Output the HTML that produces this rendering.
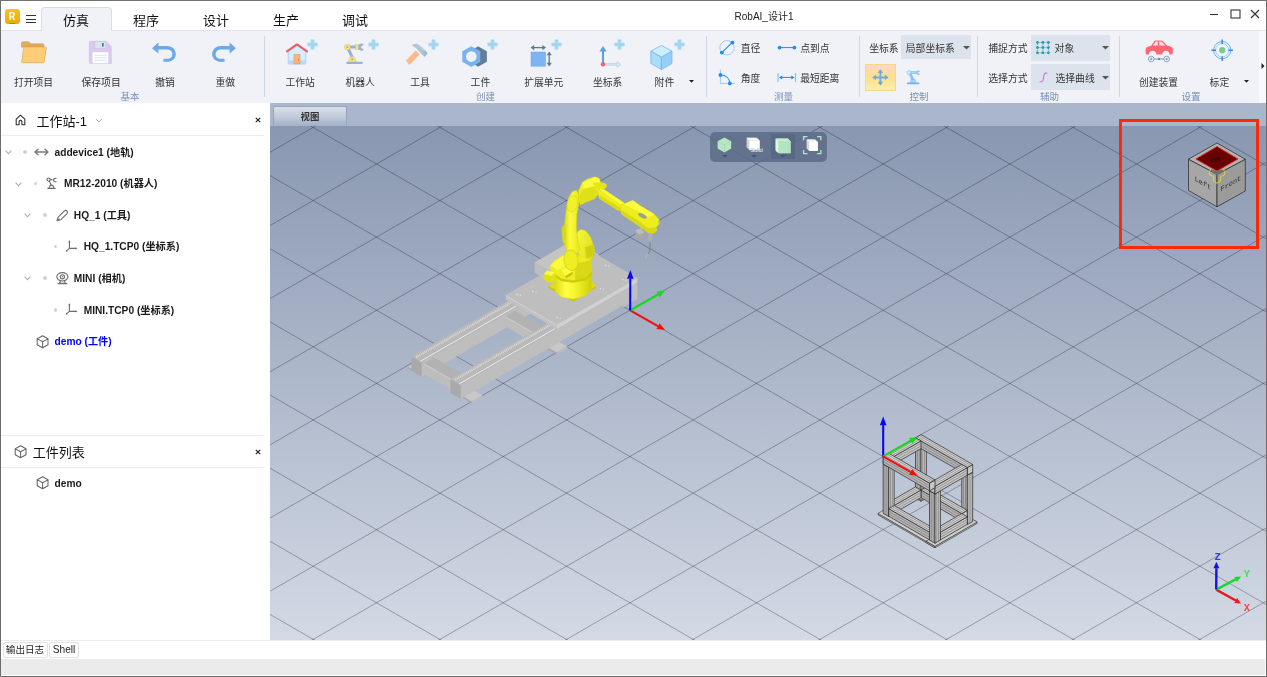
<!DOCTYPE html><html><head><meta charset="utf-8"><title>RobAI</title><style>
*{box-sizing:border-box;margin:0;padding:0}
html,body{width:1267px;height:677px;overflow:hidden;background:#fff}
body{font-family:"Liberation Sans","Noto Sans CJK SC",sans-serif;color:#222;position:relative}
.abs{position:absolute}
.t{position:absolute;white-space:nowrap;line-height:1}
.c{transform:translate(-50%,-50%)}
.lc{transform:translate(0,-50%)}
.rib{font-size:9.8px;color:#333}
.grp{font-size:9.5px;color:#7791b7}
.sep{position:absolute;width:1px;top:36px;height:61px;background:#cdd7e6}
.tree{font-size:10.2px;font-weight:bold;color:#1a1a1a}
.tab{font-size:13px;color:#111}
</style></head><body><div id="app" style="position:absolute;left:0;top:0;width:1267px;height:677px;overflow:hidden;will-change:transform">
<div class="abs" style="left:0;top:0;width:1267px;height:677px;background:#fff"></div>
<div class="abs" style="left:1px;top:30px;width:1265px;height:73px;background:#f0f2f7;border-top:1px solid #dfe6f0"></div>
<div class="abs" style="left:41px;top:7px;width:71px;height:24px;background:#f0f2f7;border:1px solid #d5deeb;border-bottom:none;border-radius:4px 4px 0 0"></div>
<div class="abs" style="left:1259px;top:31px;width:7px;height:72px;background:#f8f9fc"></div>
<svg class="abs" style="left:1260px;top:62px" width="6" height="8"><path d="M1.5 1 L4.5 4 L1.5 7Z" fill="#222"/></svg>
<div class="abs" style="left:5px;top:9px;width:15px;height:15px;border-radius:3px;background:linear-gradient(#f9c21c,#eda80c)"></div>
<div class="t c" style="left:12.4px;top:16.4px;font-size:10.5px;font-weight:bold;color:#fff;transform:translate(-50%,-50%) scaleX(0.86)">R</div>
<div class="abs" style="left:10px;top:22.5px;width:5px;height:1.5px;background:#4a8ad8"></div>
<div class="abs" style="left:26px;top:15px;width:10px;height:1.2px;background:#333"></div>
<div class="abs" style="left:26px;top:18.5px;width:10px;height:1.2px;background:#333"></div>
<div class="abs" style="left:26px;top:22px;width:10px;height:1.2px;background:#333"></div>
<div class="t c tab" style="left:76px;top:20px">仿真</div>
<div class="t c tab" style="left:146px;top:20px">程序</div>
<div class="t c tab" style="left:216px;top:20px">设计</div>
<div class="t c tab" style="left:286px;top:20px">生产</div>
<div class="t c tab" style="left:355px;top:20px">调试</div>
<div class="t c" style="left:764px;top:17.2px;font-size:10px;color:#222">RobAI_设计1</div>
<svg class="abs" style="left:1200px;top:4px" width="64" height="22"><path d="M10 10.5H18" stroke="#333" stroke-width="1.1"/><rect x="31" y="6" width="9" height="8" fill="none" stroke="#333" stroke-width="1.1"/><path d="M51 6L59 14M59 6L51 14" stroke="#333" stroke-width="1.1"/></svg>
<div class="sep" style="left:263.5px"></div>
<div class="sep" style="left:706px"></div>
<div class="sep" style="left:858.5px"></div>
<div class="sep" style="left:977.2px"></div>
<div class="sep" style="left:1118.5px"></div>
<svg class="abs" style="left:21px;top:41px;overflow:visible" width="26" height="22"><path d="M0.5 2.2Q0.5 0.8 1.8 0.8H7.2Q8 0.8 8.6 1.6L9.6 2.8H21.8Q23 2.8 23 4V6.2H0.5Z" fill="#e3ab57" stroke="#c9954a" stroke-width="0.5"/><path d="M0.5 5.5V20.6Q0.5 21.6 1.6 21.6H22Q23 21.6 23.2 20.6L25.3 7.2Q25.5 6.2 24.4 6.2H4Q3 6.2 2.8 7.2L0.6 20.8" fill="#e3ab57"/><path d="M3.6 6.1H24.5Q25.6 6.1 25.4 7.2L23.2 20.7Q23 21.7 22 21.7H1.5Q0.5 21.7 0.7 20.7L2.6 7.1Q2.8 6.1 3.6 6.1Z" fill="#ffcc78" stroke="#d9a24f" stroke-width="0.5"/></svg>
<div class="t c rib" style="left:33.5px;top:83px">打开项目</div>
<svg class="abs" style="left:88.5px;top:40.7px;overflow:visible" width="23" height="23"><path d="M1 0.3H17.2L22.3 5.4V22.4H1Q0.3 22.4 0.3 21.6V1Q0.3 0.3 1 0.3Z" fill="#dcc9f1" stroke="#c9b6e3" stroke-width="0.5"/><rect x="6" y="0.6" width="10.6" height="6.6" fill="#d9e6ef" stroke="#b9c9d6" stroke-width="0.5"/><rect x="13" y="2" width="1.6" height="3.6" fill="#5a6b7c"/><rect x="3.4" y="11" width="16" height="11.3" fill="#fff" stroke="#d8dde6" stroke-width="0.4"/><path d="M5.2 14.3H17.6M5.2 16.8H17.6M5.2 19.3H17.6" stroke="#cfe3f4" stroke-width="0.9"/></svg>
<div class="t c rib" style="left:101.1px;top:83px">保存项目</div>
<svg class="abs" style="left:152px;top:42px;overflow:visible" width="24" height="20"><path d="M0 6.2L6.4 0.4V4H14.5C20 4 23.8 7.4 23.8 12.2C23.8 16.6 20 19.8 15 19.8H12Q11.4 19.8 11.4 19.2V17.4Q11.4 16.8 12 16.8H15C18.2 16.8 20.4 15 20.4 12.2C20.4 9.2 18.2 7.4 14.8 7.4H6.4V11.6Z" fill="#6aa9ea"/></svg>
<div class="t c rib" style="left:165px;top:83px">撤销</div>
<svg class="abs" style="left:211.5px;top:42px;overflow:visible" width="24" height="20"><g transform="translate(24,0) scale(-1,1)"><path d="M0 6.2L6.4 0.4V4H14.5C20 4 23.8 7.4 23.8 12.2C23.8 16.6 20 19.8 15 19.8H12Q11.4 19.8 11.4 19.2V17.4Q11.4 16.8 12 16.8H15C18.2 16.8 20.4 15 20.4 12.2C20.4 9.2 18.2 7.4 14.8 7.4H6.4V11.6Z" fill="#6aa9ea"/></g></svg>
<div class="t c rib" style="left:225.3px;top:83px">重做</div>
<div class="t c grp" style="left:130px;top:96.5px">基本</div>
<svg class="abs" style="left:286px;top:42.5px;overflow:visible" width="22" height="22"><path d="M2.2 8.2L11 2.4L19.8 8.2V20Q19.8 21 18.8 21H3.2Q2.2 21 2.2 20Z" fill="#d6edfd" stroke="#93c4ee" stroke-width="0.7"/><path d="M2.6 17.6H19.4V20Q19.4 20.7 18.8 20.7H3.2Q2.6 20.7 2.6 20Z" fill="#b3dbf7"/><path d="M1 8.4L11 1.4L21 8.4" fill="none" stroke="#ee5a63" stroke-width="2" stroke-linecap="round" stroke-linejoin="round"/><rect x="8" y="11.5" width="6" height="9.4" fill="#ffb27a" stroke="#e8935a" stroke-width="0.6"/><rect x="12.1" y="16" width="0.9" height="1.4" fill="#c9703a"/></svg>
<svg class="abs" style="left:307.1px;top:38.7px;overflow:visible" width="11" height="11"><path d="M3.9 0.7h3.2v3.2h3.2v3.2H7.1v3.2H3.9V7.1H0.7V3.9H3.9z" fill="#a2d5f1" stroke="#aedbf3" stroke-width="0.6" stroke-linejoin="round"/></svg>
<div class="t c rib" style="left:300.2px;top:83px">工作站</div>
<svg class="abs" style="left:344px;top:42.5px;overflow:visible" width="21" height="22"><rect x="2.3" y="18.8" width="16.4" height="2.3" rx="0.8" fill="#9bb2d0"/><path d="M4.2 18.4L6.1 13.7H10.5L12.4 18.4Z" fill="#f6e27c" stroke="#dcc65e" stroke-width="0.5"/><circle cx="8.3" cy="16.3" r="1.1" fill="#9bb2d0"/><path d="M2.2 5.2L5.4 4.2L9.4 13.4L6.6 14Z" fill="#9bb2d0"/><rect x="5" y="2.5" width="7.4" height="3" fill="#9bb2d0"/><circle cx="3.3" cy="4" r="2.9" fill="#f8e580" stroke="#dcc65e" stroke-width="0.6"/><circle cx="3.3" cy="4" r="1.1" fill="#9bb2d0"/><rect x="11.6" y="1.4" width="2.8" height="5.4" fill="#f6e27c" stroke="#dcc65e" stroke-width="0.4"/><path d="M14.4 1.8L17.8 0.2L20 1.8L17.2 3.2V5L20 6.6L17.8 8L14.4 6.4Z" fill="#9bb2d0"/></svg>
<svg class="abs" style="left:367.5px;top:38.7px;overflow:visible" width="11" height="11"><path d="M3.9 0.7h3.2v3.2h3.2v3.2H7.1v3.2H3.9V7.1H0.7V3.9H3.9z" fill="#a2d5f1" stroke="#aedbf3" stroke-width="0.6" stroke-linejoin="round"/></svg>
<div class="t c rib" style="left:360.2px;top:83px">机器人</div>
<svg class="abs" style="left:406px;top:43px;overflow:visible" width="22" height="22"><path d="M0.3 17.6L9.7 7.9L13.5 11.3L4 21Q3.2 21.6 2.6 21Z" fill="#ffb98a" stroke="#f2a674" stroke-width="0.4"/><path d="M6.2 1.8Q8.6 0.6 11 0.8Q13.6 1.6 15.6 3.8L20.6 8.8L21.6 10.6L18.6 13.8L16.4 11.9L12.9 8.2L10.4 5.6Q8.6 3.8 6.4 3Z" fill="#adc6d8"/><path d="M16.8 9.2L19 7.2L21.6 10.6L18.6 13.8Z" fill="#9dbace"/><path d="M11 1.4Q13.4 2 15.2 4L18.6 7.4" fill="none" stroke="#cfdfea" stroke-width="0.9"/></svg>
<svg class="abs" style="left:427.5px;top:38.7px;overflow:visible" width="11" height="11"><path d="M3.9 0.7h3.2v3.2h3.2v3.2H7.1v3.2H3.9V7.1H0.7V3.9H3.9z" fill="#a2d5f1" stroke="#aedbf3" stroke-width="0.6" stroke-linejoin="round"/></svg>
<div class="t c rib" style="left:420px;top:83px">工具</div>
<svg class="abs" style="left:462px;top:45.5px;overflow:visible" width="26" height="21"><path d="M16 0.2L24.9 5.2V15.8L16 20.8L9 16V5Z" fill="#637c9a"/><path d="M9.3 0.2L18.3 5.3V15.8L9.3 20.9L0.3 15.8V5.3Z" fill="#78b3f0"/><circle cx="9.3" cy="10.6" r="5.3" fill="#f0f2f7"/></svg>
<svg class="abs" style="left:487.4px;top:38.7px;overflow:visible" width="11" height="11"><path d="M3.9 0.7h3.2v3.2h3.2v3.2H7.1v3.2H3.9V7.1H0.7V3.9H3.9z" fill="#a2d5f1" stroke="#aedbf3" stroke-width="0.6" stroke-linejoin="round"/></svg>
<div class="t c rib" style="left:480.4px;top:83px">工件</div>
<svg class="abs" style="left:530px;top:43px;overflow:visible" width="24" height="24"><rect x="1" y="9" width="14.6" height="14.2" fill="#7db5f3" stroke="#6ea5e6" stroke-width="0.5"/><path d="M1.6 4.6H15" stroke="#5f7892" stroke-width="1.3"/><path d="M0.6 4.6L4.2 2V7.2Z M16 4.6L12.4 2V7.2Z" fill="#5f7892"/><path d="M19.2 10V22" stroke="#5f7892" stroke-width="1.3"/><path d="M19.2 8.6L16.6 12.2H21.8Z M19.2 23.4L16.6 19.8H21.8Z" fill="#5f7892"/></svg>
<svg class="abs" style="left:551.0px;top:38.7px;overflow:visible" width="11" height="11"><path d="M3.9 0.7h3.2v3.2h3.2v3.2H7.1v3.2H3.9V7.1H0.7V3.9H3.9z" fill="#a2d5f1" stroke="#aedbf3" stroke-width="0.6" stroke-linejoin="round"/></svg>
<div class="t c rib" style="left:543.8px;top:83px">扩展单元</div>
<svg class="abs" style="left:596px;top:44px;overflow:visible" width="28" height="24"><path d="M8.4 19.6H21V17.6L25 20.4L21 23.2V21.2H8.4Z" fill="#d8eaf6" stroke="#a9cbe0" stroke-width="0.6"/><path d="M7 20V6" stroke="#5a9fe8" stroke-width="2"/><path d="M7 2L3.4 7.4H10.6Z" fill="#5a9fe8"/><circle cx="7" cy="20.2" r="2.2" fill="#f4606c"/></svg>
<svg class="abs" style="left:614.2px;top:38.7px;overflow:visible" width="11" height="11"><path d="M3.9 0.7h3.2v3.2h3.2v3.2H7.1v3.2H3.9V7.1H0.7V3.9H3.9z" fill="#a2d5f1" stroke="#aedbf3" stroke-width="0.6" stroke-linejoin="round"/></svg>
<div class="t c rib" style="left:607.7px;top:83px">坐标系</div>
<svg class="abs" style="left:650px;top:45px;overflow:visible" width="23" height="25"><path d="M11.4 0.4L22 6.2L11.4 12.2L0.8 6.2Z" fill="#cdeeff" stroke="#6fb0e8" stroke-width="0.7" stroke-linejoin="round"/><path d="M0.8 6.2L11.4 12.2V24.6L0.8 18.4Z" fill="#aadcfb" stroke="#6fb0e8" stroke-width="0.7" stroke-linejoin="round"/><path d="M22 6.2L11.4 12.2V24.6L22 18.4Z" fill="#94d0f7" stroke="#6fb0e8" stroke-width="0.7" stroke-linejoin="round"/></svg>
<svg class="abs" style="left:674.2px;top:38.7px;overflow:visible" width="11" height="11"><path d="M3.9 0.7h3.2v3.2h3.2v3.2H7.1v3.2H3.9V7.1H0.7V3.9H3.9z" fill="#a2d5f1" stroke="#aedbf3" stroke-width="0.6" stroke-linejoin="round"/></svg>
<div class="t c rib" style="left:664.4px;top:83px">附件</div>
<svg class="abs" style="left:689.3px;top:80.1px;overflow:visible" width="5" height="2.8"><path d="M0 0H5 L2.5 2.8Z" fill="#222"/></svg>
<div class="t c grp" style="left:485.5px;top:96.5px">创建</div>
<svg class="abs" style="left:718px;top:39px;overflow:visible" width="18" height="18"><circle cx="9" cy="8.8" r="7.2" fill="none" stroke="#92c4f6" stroke-width="0.85"/><path d="M3.8 13.6L14 3.6" stroke="#1a8cff" stroke-width="1.1"/><circle cx="3.8" cy="13.6" r="1.9" fill="#1a8cff"/><circle cx="14.4" cy="3.6" r="1.9" fill="#1a8cff"/></svg>
<div class="t lc rib" style="left:740.8px;top:49.3px">直径</div>
<svg class="abs" style="left:777px;top:43px;overflow:visible" width="20" height="10"><path d="M2 4.6H18" stroke="#1a8cff" stroke-width="1"/><circle cx="2.6" cy="4.6" r="1.9" fill="#1a8cff"/><circle cx="17.4" cy="4.6" r="1.9" fill="#1a8cff"/></svg>
<div class="t lc rib" style="left:800.2px;top:49.3px">点到点</div>
<svg class="abs" style="left:718px;top:68px;overflow:visible" width="18" height="18"><path d="M2.4 1.6V15.4H17" fill="none" stroke="#92c4f6" stroke-width="0.85"/><path d="M2.4 7C8 7 11.6 10.4 11.8 15.4" fill="none" stroke="#1a8cff" stroke-width="1.1"/><circle cx="2.4" cy="7" r="1.9" fill="#1a8cff"/><circle cx="11.8" cy="15.4" r="1.9" fill="#1a8cff"/></svg>
<div class="t lc rib" style="left:740.8px;top:79.3px">角度</div>
<svg class="abs" style="left:777px;top:72px;overflow:visible" width="20" height="11"><path d="M1 1V10M18.5 1V10" stroke="#8cc0f6" stroke-width="1.2"/><path d="M3 5.4H16.5" stroke="#1a8cff" stroke-width="1"/><path d="M2 5.4L5.2 3.4V7.4Z M17.5 5.4L14.3 3.4V7.4Z" fill="#1a8cff"/></svg>
<div class="t lc rib" style="left:800.2px;top:79.3px">最短距离</div>
<div class="t c grp" style="left:783.4px;top:96.5px">测量</div>
<div class="t lc rib" style="left:869.2px;top:48.8px">坐标系</div>
<div class="abs" style="left:901.3px;top:35.3px;width:70px;height:23.8px;background:#dde3ec"></div>
<div class="t lc rib" style="left:905.8px;top:48.8px">局部坐标系</div>
<svg class="abs" style="left:962.9px;top:45.6px;overflow:visible" width="7" height="3.6"><path d="M0 0H7 L3.5 3.6Z" fill="#555"/></svg>
<div class="abs" style="left:865.3px;top:63.8px;width:30.8px;height:27.4px;background:linear-gradient(#ffd6cb 0%,#ffdf8f 45%,#ffe38e 60%,#ffeeb0 100%);border:1px solid #f3d88c"></div>
<svg class="abs" style="left:872px;top:69px;overflow:visible" width="17" height="17"><path d="M8.4 2.4V14.4M2.4 8.4H14.4" stroke="#6eaeea" stroke-width="2"/><path d="M8.4 0.6L10.6 3.6H6.2Z M8.4 16.2L10.6 13.2H6.2Z M0.6 8.4L3.6 6.2V10.6Z M16.2 8.4L13.2 6.2V10.6Z" fill="#6eaeea" stroke="#5f9fe0" stroke-width="0.5" stroke-linejoin="round"/></svg>
<svg class="abs" style="left:906px;top:70px;overflow:visible" width="15" height="15"><rect x="1" y="12.4" width="12.4" height="1.8" rx="0.8" fill="#6ab2f2"/><path d="M4 12.4L5.6 9H8.6L10.2 12.4Z" fill="#a8d4fa" stroke="#6ab2f2" stroke-width="0.5"/><path d="M2.6 3.4L5 2.8L7.8 9.2L5.6 9.6Z" fill="#8cc4f6" stroke="#6ab2f2" stroke-width="0.4"/><rect x="3.4" y="1.4" width="7" height="2.4" fill="#a8d4fa" stroke="#6ab2f2" stroke-width="0.4"/><circle cx="3" cy="2.6" r="2" fill="#d4eafc" stroke="#6ab2f2" stroke-width="0.5"/><path d="M10.4 1L13 0.2L14 1.4L12.2 2.2V3.2L14 4L13 5.2L10.4 4.2Z" fill="#8cc4f6"/></svg>
<div class="t c grp" style="left:919px;top:96.5px">控制</div>
<div class="t lc rib" style="left:988.3px;top:49.3px">捕捉方式</div>
<div class="abs" style="left:1030.6px;top:34.5px;width:79.4px;height:26px;background:#dde3ec"></div>
<svg class="abs" style="left:1036.2px;top:40.8px;overflow:visible" width="14" height="13.4"><path d="M1.4 1.4H12.4V11.8H1.4Z M6.9 1.4V11.8 M1.4 6.6H12.4" fill="none" stroke="#2a98ff" stroke-width="0.9" stroke-dasharray="1.1 0.9"/><circle cx="1.4" cy="1.4" r="1.35" fill="#10a88c"/><circle cx="1.4" cy="6.6" r="1.35" fill="#10a88c"/><circle cx="1.4" cy="11.8" r="1.35" fill="#10a88c"/><circle cx="6.9" cy="1.4" r="1.35" fill="#10a88c"/><circle cx="6.9" cy="6.6" r="1.35" fill="#10a88c"/><circle cx="6.9" cy="11.8" r="1.35" fill="#10a88c"/><circle cx="12.4" cy="1.4" r="1.35" fill="#10a88c"/><circle cx="12.4" cy="6.6" r="1.35" fill="#10a88c"/><circle cx="12.4" cy="11.8" r="1.35" fill="#10a88c"/></svg>
<div class="t lc rib" style="left:1054.6px;top:49.3px">对象</div>
<svg class="abs" style="left:1101.7px;top:46.2px;overflow:visible" width="7" height="3.6"><path d="M0 0H7 L3.5 3.6Z" fill="#555"/></svg>
<div class="t lc rib" style="left:988.3px;top:79px">选择方式</div>
<div class="abs" style="left:1030.6px;top:64.3px;width:79.4px;height:25.8px;background:#dde3ec"></div>
<svg class="abs" style="left:1038.5px;top:72px;overflow:visible" width="10" height="11"><path d="M1 9.8C3.6 10.4 4.3 8.6 4.5 5.6C4.7 2.6 5.3 0.8 8 1.2" fill="none" stroke="#c478e6" stroke-width="1.1" stroke-linecap="round"/></svg>
<div class="t lc rib" style="left:1055.5px;top:79px">选择曲线</div>
<svg class="abs" style="left:1101.7px;top:76.2px;overflow:visible" width="7" height="3.6"><path d="M0 0H7 L3.5 3.6Z" fill="#555"/></svg>
<div class="t c grp" style="left:1049.6px;top:96.8px">辅助</div>
<svg class="abs" style="left:1144.5px;top:39.8px;overflow:visible" width="28.5" height="23"><path d="M0.6 13.2V9.6Q0.6 7 3.6 6.4L6.2 5.8L9 1.4Q9.6 0.4 10.8 0.4H16Q17.2 0.4 18 1.2L22 5.6L25.6 6.4Q27.8 7 27.8 9.4V13Q27.8 14.4 26.4 14.4H24.6C24.6 9.6 17.2 9.6 17.2 14.4H11.4C11.4 9.6 3.8 9.6 3.8 14.4H2Q0.6 14.4 0.6 13.2Z" fill="#ff6673"/><path d="M8 5.6L10.2 2.2Q10.6 1.6 11.4 1.6H12.8V5.6Z M14.2 1.6H15.8Q16.6 1.6 17.2 2.2L20.2 5.6H14.2Z" fill="#ffe3e5"/><circle cx="6.2" cy="19" r="2.8" fill="none" stroke="#6f8fb4" stroke-width="0.8"/><circle cx="6.2" cy="19" r="1.1" fill="#6f8fb4"/><circle cx="21.6" cy="19" r="2.8" fill="none" stroke="#6f8fb4" stroke-width="0.8"/><circle cx="21.6" cy="19" r="1.1" fill="#6f8fb4"/><path d="M9 19H18.8" stroke="#6f8fb4" stroke-width="0.9"/><circle cx="13.9" cy="19" r="1.2" fill="#6f8fb4"/></svg>
<div class="t c rib" style="left:1158.5px;top:83px">创建装置</div>
<svg class="abs" style="left:1210.5px;top:38.6px;overflow:visible" width="22.4" height="22.4"><circle cx="11.2" cy="11.2" r="8.6" fill="#eef6ff" stroke="#5aa4f2" stroke-width="0.9"/><circle cx="11.2" cy="11.2" r="6.6" fill="none" stroke="#8cc0f6" stroke-width="0.8"/><path d="M11.2 0.4V5 M11.2 17.4V22 M0.4 11.2H5 M17.4 11.2H22" stroke="#3f86d8" stroke-width="1.5"/><circle cx="11.2" cy="11.2" r="3.1" fill="#7cc98a"/></svg>
<div class="t c rib" style="left:1219.4px;top:83px">标定</div>
<svg class="abs" style="left:1244.3px;top:79.8px;overflow:visible" width="5" height="2.8"><path d="M0 0H5 L2.5 2.8Z" fill="#222"/></svg>
<div class="t c grp" style="left:1191px;top:96.8px">设置</div>
<svg class="abs" style="left:14.5px;top:113.5px;overflow:visible" width="11" height="12"><path d="M1.2 5.2L5.5 1.2L9.8 5.2V10.8H6.9V7.6Q6.9 6.4 5.5 6.4Q4.1 6.4 4.1 7.6V10.8H1.2Z" fill="none" stroke="#333" stroke-width="1.1" stroke-linejoin="round"/></svg>
<div class="t lc" style="left:36.5px;top:120.5px;font-size:13px;color:#111">工作站-1</div>
<svg class="abs" style="left:94.5px;top:118px;overflow:visible" width="8" height="5"><path d="M1 1L4 4L7 1" fill="none" stroke="#b8b8b8" stroke-width="1"/></svg>
<svg class="abs" style="left:255px;top:117px;overflow:visible" width="6" height="6"><path d="M0.8 0.8L5.2 5.2M5.2 0.8L0.8 5.2" stroke="#222" stroke-width="1.2"/></svg>
<div class="abs" style="left:1px;top:135px;width:263px;height:1px;background:#ececec"></div>
<svg class="abs" style="left:5.0px;top:150px;overflow:visible" width="7" height="4.5"><path d="M0.6 0.6L3.5 3.6L6.4 0.6" fill="none" stroke="#b0b0b0" stroke-width="1.1"/></svg>
<div class="abs" style="left:23.4px;top:150.2px;width:3.6px;height:3.6px;border-radius:2px;background:#d2d2d2"></div>
<svg class="abs" style="left:34px;top:147px;overflow:visible" width="15" height="10"><path d="M1 5H14M1 5L4 2.2M1 5L4 7.8M14 5L11 2.2M14 5L11 7.8" fill="none" stroke="#7a7a7a" stroke-width="1.35" stroke-linecap="round" stroke-linejoin="round"/></svg>
<div class="t lc tree" style="left:54.5px;top:152.7px">addevice1 (地轨)</div>
<svg class="abs" style="left:14.5px;top:181.5px;overflow:visible" width="7" height="4.5"><path d="M0.6 0.6L3.5 3.6L6.4 0.6" fill="none" stroke="#b0b0b0" stroke-width="1.1"/></svg>
<div class="abs" style="left:33.800000000000004px;top:181.7px;width:3.6px;height:3.6px;border-radius:2px;background:#d2d2d2"></div>
<svg class="abs" style="left:46px;top:177.1px;overflow:visible" width="12" height="12.4"><path d="M1.4 11.4H9.6 M3 11.2L4.2 8.4H6.8L8 11.2 M5.2 8.2L3.2 3.6 M2.6 2.6H6.4" fill="none" stroke="#6a6a6a" stroke-width="1.1" stroke-linejoin="round"/><circle cx="2.6" cy="2.6" r="1.6" fill="#fff" stroke="#6a6a6a" stroke-width="1.1"/><path d="M10.6 1.2Q7.6 1 7.6 3Q7.6 5 10.6 4.8" fill="none" stroke="#6a6a6a" stroke-width="1.1"/></svg>
<div class="t lc tree" style="left:64px;top:184.2px">MR12-2010 (机器人)</div>
<svg class="abs" style="left:24.2px;top:213px;overflow:visible" width="7" height="4.5"><path d="M0.6 0.6L3.5 3.6L6.4 0.6" fill="none" stroke="#b0b0b0" stroke-width="1.1"/></svg>
<div class="abs" style="left:43.400000000000006px;top:213.2px;width:3.6px;height:3.6px;border-radius:2px;background:#d2d2d2"></div>
<svg class="abs" style="left:56px;top:208.6px;overflow:visible" width="12.4" height="12.4"><path d="M1 11.6L2 8.4L8.2 2.2Q9.8 0.8 11 2Q12.2 3.4 10.8 4.8L4.6 10.8Z M1 11.6L3.4 9.6" fill="none" stroke="#6e6e6e" stroke-width="1.1" stroke-linejoin="round"/></svg>
<div class="t lc tree" style="left:73.8px;top:215.7px">HQ_1 (工具)</div>
<div class="abs" style="left:53.800000000000004px;top:244.79999999999998px;width:3.6px;height:3.6px;border-radius:2px;background:#d2d2d2"></div>
<svg class="abs" style="left:64.6px;top:240.0px;overflow:visible" width="13" height="12.4"><path d="M4.4 1V8.4H11.4 M4.4 8.4L1.2 11.2" fill="none" stroke="#6e6e6e" stroke-width="1.1"/><path d="M4.4 0.2L3.2 2.2H5.6Z M12.4 8.4L10.4 7.2V9.6Z M0.6 11.8L1.2 9.8L2.6 11.2Z" fill="#6e6e6e"/></svg>
<div class="t lc tree" style="left:83.7px;top:247.29999999999998px">HQ_1.TCP0 (坐标系)</div>
<svg class="abs" style="left:24.2px;top:276.2px;overflow:visible" width="7" height="4.5"><path d="M0.6 0.6L3.5 3.6L6.4 0.6" fill="none" stroke="#b0b0b0" stroke-width="1.1"/></svg>
<div class="abs" style="left:43.400000000000006px;top:276.4px;width:3.6px;height:3.6px;border-radius:2px;background:#d2d2d2"></div>
<svg class="abs" style="left:55.6px;top:272.2px;overflow:visible" width="13" height="12.4"><ellipse cx="6.4" cy="4.8" rx="5.6" ry="4.2" fill="none" stroke="#6e6e6e" stroke-width="1.1"/><circle cx="6.4" cy="4.8" r="2.1" fill="none" stroke="#6e6e6e" stroke-width="1.1"/><circle cx="6.4" cy="4.8" r="0.7" fill="#6e6e6e"/><path d="M4.4 9L3.4 11.4H9.4L8.4 9 M1.6 11.6H11.2" fill="none" stroke="#6e6e6e" stroke-width="1.1"/></svg>
<div class="t lc tree" style="left:73.8px;top:278.9px">MINI (相机)</div>
<div class="abs" style="left:53.800000000000004px;top:308.0px;width:3.6px;height:3.6px;border-radius:2px;background:#d2d2d2"></div>
<svg class="abs" style="left:64.6px;top:303.2px;overflow:visible" width="13" height="12.4"><path d="M4.4 1V8.4H11.4 M4.4 8.4L1.2 11.2" fill="none" stroke="#6e6e6e" stroke-width="1.1"/><path d="M4.4 0.2L3.2 2.2H5.6Z M12.4 8.4L10.4 7.2V9.6Z M0.6 11.8L1.2 9.8L2.6 11.2Z" fill="#6e6e6e"/></svg>
<div class="t lc tree" style="left:83.7px;top:310.5px">MINI.TCP0 (坐标系)</div>
<svg class="abs" style="left:35.6px;top:334.59999999999997px;overflow:visible" width="13.2" height="13.6"><path d="M6.6 0.8L12 3.8V9.8L6.6 12.8L1.2 9.8V3.8Z M1.4 3.9L6.6 6.8L11.8 3.9 M6.6 6.8V12.6" fill="none" stroke="#666" stroke-width="1.05" stroke-linejoin="round"/></svg>
<div class="t lc tree" style="left:54.5px;top:342.09999999999997px;color:#0000ff">demo (工件)</div>
<div class="abs" style="left:1px;top:435px;width:263px;height:1px;background:#ececec"></div>
<svg class="abs" style="left:13.6px;top:445px;overflow:visible" width="13.2" height="13.6"><path d="M6.6 0.8L12 3.8V9.8L6.6 12.8L1.2 9.8V3.8Z M1.4 3.9L6.6 6.8L11.8 3.9 M6.6 6.8V12.6" fill="none" stroke="#666" stroke-width="1.05" stroke-linejoin="round"/></svg>
<div class="t lc" style="left:32.8px;top:452.3px;font-size:13px;color:#111">工件列表</div>
<svg class="abs" style="left:255px;top:448.5px;overflow:visible" width="6" height="6"><path d="M0.8 0.8L5.2 5.2M5.2 0.8L0.8 5.2" stroke="#222" stroke-width="1.2"/></svg>
<div class="abs" style="left:1px;top:466.5px;width:263px;height:1px;background:#ececec"></div>
<svg class="abs" style="left:35.6px;top:476.4px;overflow:visible" width="13.2" height="13.6"><path d="M6.6 0.8L12 3.8V9.8L6.6 12.8L1.2 9.8V3.8Z M1.4 3.9L6.6 6.8L11.8 3.9 M6.6 6.8V12.6" fill="none" stroke="#666" stroke-width="1.05" stroke-linejoin="round"/></svg>
<div class="t lc tree" style="left:54.5px;top:484.0px">demo</div>
<div class="abs" style="left:270px;top:103px;width:996px;height:23px;background:#aab6cb"></div>
<div class="abs" style="left:273px;top:106.3px;width:73.6px;height:19.7px;background:linear-gradient(#d9dfe9,#c4cddc 45%,#a3b0c7);border:1px solid #97a4ba;border-bottom:none;border-radius:2px 2px 0 0"></div>
<div class="t c" style="left:310px;top:116.5px;font-size:9.4px;font-weight:bold;color:#333">视图</div>
<div class="abs" style="left:270px;top:126px;width:996px;height:514px;background:linear-gradient(#8997b1,#d3dae5)"></div>
<svg class="abs" style="left:0;top:0" width="1267" height="677" viewBox="0 0 1267 677"><defs><clipPath id="vp"><rect x="270" y="126" width="996" height="514"/></clipPath></defs><g clip-path="url(#vp)"><path d="M265.0 -778.1L1271.0 -197.2M265.0 -722.4L1271.0 -1303.4M265.0 -705.0L1271.0 -124.1M265.0 -649.3L1271.0 -1230.2M265.0 -631.8L1271.0 -50.9M265.0 -576.2L1271.0 -1157.1M265.0 -558.7L1271.0 22.2M265.0 -503.0L1271.0 -1083.9M265.0 -485.6L1271.0 95.4M265.0 -429.9L1271.0 -1010.8M265.0 -412.4L1271.0 168.5M265.0 -356.7L1271.0 -937.7M265.0 -339.3L1271.0 241.6M265.0 -283.6L1271.0 -864.5M265.0 -266.1L1271.0 314.8M265.0 -210.5L1271.0 -791.4M265.0 -193.0L1271.0 387.9M265.0 -137.3L1271.0 -718.2M265.0 -119.9L1271.0 461.1M265.0 -64.2L1271.0 -645.1M265.0 -46.7L1271.0 534.2M265.0 9.0L1271.0 -572.0M265.0 26.4L1271.0 607.3M265.0 82.1L1271.0 -498.8M265.0 99.6L1271.0 680.5M265.0 155.2L1271.0 -425.7M265.0 172.7L1271.0 753.6M265.0 228.4L1271.0 -352.5M265.0 245.8L1271.0 826.8M265.0 301.5L1271.0 -279.4M265.0 319.0L1271.0 899.9M265.0 374.7L1271.0 -206.3M265.0 392.1L1271.0 973.0M265.0 447.8L1271.0 -133.1M265.0 465.3L1271.0 1046.2M265.0 520.9L1271.0 -60.0M265.0 538.4L1271.0 1119.3M265.0 594.1L1271.0 13.2M265.0 611.5L1271.0 1192.5M265.0 667.2L1271.0 86.3M265.0 684.7L1271.0 1265.6M265.0 740.4L1271.0 159.4M265.0 757.8L1271.0 1338.7M265.0 813.5L1271.0 232.6M265.0 831.0L1271.0 1411.9M265.0 886.6L1271.0 305.7M265.0 904.1L1271.0 1485.0M265.0 959.8L1271.0 378.9M265.0 977.2L1271.0 1558.2M265.0 1032.9L1271.0 452.0M265.0 1050.4L1271.0 1631.3M265.0 1106.1L1271.0 525.1M265.0 1123.5L1271.0 1704.4M265.0 1179.2L1271.0 598.3M265.0 1196.7L1271.0 1777.6M265.0 1252.3L1271.0 671.4" stroke="#10141c" stroke-opacity="0.31" stroke-width="1" fill="none"/><polygon points="407.9,368.5 417.5,374.0 417.5,372.0 407.9,366.5" fill="#a8a8a8"/><polygon points="417.5,374.0 426.1,369.0 426.1,367.0 417.5,372.0" fill="#bdbdbd"/><polygon points="407.9,366.5 417.5,372.0 426.1,367.0 416.6,361.5" fill="#c8c8c8"/><polygon points="461.6,397.5 472.0,403.5 472.0,401.5 461.6,395.5" fill="#a8a8a8"/><polygon points="472.0,403.5 482.4,397.5 482.4,395.5 472.0,401.5" fill="#bdbdbd"/><polygon points="461.6,395.5 472.0,401.5 482.4,395.5 472.0,389.5" fill="#c8c8c8"/><polygon points="546.5,348.5 556.9,354.5 556.9,352.5 546.5,346.5" fill="#a8a8a8"/><polygon points="556.9,354.5 567.3,348.5 567.3,346.5 556.9,352.5" fill="#bdbdbd"/><polygon points="546.5,346.5 556.9,352.5 567.3,346.5 556.9,340.5" fill="#c8c8c8"/><polygon points="612.3,301.5 622.7,307.5 622.7,305.5 612.3,299.5" fill="#a8a8a8"/><polygon points="622.7,307.5 637.4,299.0 637.4,297.0 622.7,305.5" fill="#bdbdbd"/><polygon points="612.3,299.5 622.7,305.5 637.4,297.0 627.0,291.0" fill="#c8c8c8"/><polygon points="534.4,272.5 560.4,287.5 560.4,277.5 534.4,262.5" fill="#bdbdbd"/><polygon points="560.4,287.5 599.3,265.0 599.3,255.0 560.4,277.5" fill="#b8b8b8"/><polygon points="534.4,262.5 560.4,277.5 599.3,255.0 573.4,240.0" fill="#c4c4c4"/><polygon points="411.4,370.5 421.8,376.5 421.8,362.5 411.4,356.5" fill="#a9a9a9"/><polygon points="421.8,376.5 598.5,274.5 598.5,260.5 421.8,362.5" fill="#bebebe"/><polygon points="411.4,356.5 421.8,362.5 598.5,260.5 588.1,254.5" fill="#b9b9b9"/><polygon points="423.5,373.5 452.1,390.0 452.1,380.0 423.5,363.5" fill="#bdbdbd"/><polygon points="452.1,390.0 462.5,384.0 462.5,374.0 452.1,380.0" fill="#b8b8b8"/><polygon points="423.5,363.5 452.1,380.0 462.5,374.0 433.9,357.5" fill="#b2b2b2"/><line x1="423.5" y1="363.5" x2="452.1" y2="380.0" stroke="#d8d8d8" stroke-width="0.7"/><polygon points="504.9,326.5 533.5,343.0 533.5,333.0 504.9,316.5" fill="#bdbdbd"/><polygon points="533.5,343.0 543.9,337.0 543.9,327.0 533.5,333.0" fill="#b8b8b8"/><polygon points="504.9,316.5 533.5,333.0 543.9,327.0 515.3,310.5" fill="#b2b2b2"/><line x1="504.9" y1="316.5" x2="533.5" y2="333.0" stroke="#d8d8d8" stroke-width="0.7"/><polygon points="450.4,393.0 460.8,399.0 460.8,385.0 450.4,379.0" fill="#a9a9a9"/><polygon points="460.8,399.0 637.4,297.0 637.4,283.0 460.8,385.0" fill="#bebebe"/><polygon points="450.4,379.0 460.8,385.0 637.4,283.0 627.0,277.0" fill="#b9b9b9"/><line x1="416.2" y1="357.2" x2="510.6" y2="302.8" stroke="#dadada" stroke-width="2.2" stroke-dasharray="1 0.9"/><line x1="455.1" y1="379.8" x2="549.5" y2="325.2" stroke="#dadada" stroke-width="2.2" stroke-dasharray="1 0.9"/><line x1="420.1" y1="361.5" x2="516.2" y2="306.0" stroke="#ebebeb" stroke-width="1"/><line x1="459.0" y1="384.0" x2="555.2" y2="328.5" stroke="#ebebeb" stroke-width="1"/><polygon points="505.8,299.5 556.9,329.0 556.9,324.5 505.8,295.0" fill="#c2c2c2"/><polygon points="556.9,329.0 637.4,282.5 637.4,278.0 556.9,324.5" fill="#d0d0d0"/><polygon points="505.8,295.0 556.9,324.5 637.4,278.0 586.3,248.5" fill="#bebebe"/><line x1="505.8" y1="295.6" x2="556.9" y2="325.1" stroke="#d4d4d4" stroke-width="0.8"/><circle cx="517.2" cy="294.5" r="0.7" fill="#e6e6e6"/><circle cx="520.4" cy="295.1" r="0.7" fill="#e6e6e6"/><circle cx="532.8" cy="291.5" r="0.7" fill="#e6e6e6"/><circle cx="536.0" cy="292.1" r="0.7" fill="#e6e6e6"/><circle cx="557.0" cy="317.5" r="0.7" fill="#e6e6e6"/><circle cx="560.2" cy="318.1" r="0.7" fill="#e6e6e6"/><circle cx="600.3" cy="288.5" r="0.7" fill="#e6e6e6"/><circle cx="603.5" cy="289.1" r="0.7" fill="#e6e6e6"/><circle cx="622.8" cy="279.5" r="0.7" fill="#e6e6e6"/><circle cx="626.0" cy="280.1" r="0.7" fill="#e6e6e6"/><circle cx="605.5" cy="265.5" r="0.7" fill="#e6e6e6"/><circle cx="608.7" cy="266.1" r="0.7" fill="#e6e6e6"/><defs><linearGradient id="cyl" x1="0" x2="1" y1="0" y2="0"><stop offset="0" stop-color="#dede16"/><stop offset="0.3" stop-color="#ffff46"/><stop offset="0.62" stop-color="#f0f026"/><stop offset="1" stop-color="#cdcd0e"/></linearGradient><linearGradient id="arm" x1="0" x2="1" y1="0" y2="0"><stop offset="0" stop-color="#dada14"/><stop offset="0.35" stop-color="#fbfb3c"/><stop offset="1" stop-color="#e4e41c"/></linearGradient><linearGradient id="drum" x1="0" x2="1" y1="0" y2="1"><stop offset="0" stop-color="#fdfd42"/><stop offset="1" stop-color="#d8d814"/></linearGradient></defs><polygon points="548.5,286.5 556.0,281.5 592.0,281.5 595.8,286.5 573.3,300.9" fill="#dcdc18" stroke="#dcdc18" stroke-width="0.6" stroke-linejoin="round"/><polygon points="548.5,286.5 573.3,299.7 595.8,286.5 595.8,287.6 573.3,301.2 548.5,287.6" fill="#c3c30e" stroke="#c3c30e" stroke-width="0.6" stroke-linejoin="round"/><polygon points="555.1,274.6 555.1,291.2 561.3,297.1 573.3,299.2 584.9,295.9 591.8,289.4 591.8,272.3" fill="url(#cyl)" stroke="#dada16" stroke-width="0.5" stroke-linejoin="round"/><ellipse cx="584.7" cy="245.7" rx="8.5" ry="16.5" fill="url(#drum)" stroke="#cbcb10" stroke-width="0.5" transform="rotate(-14 584.7 245.7)"/><polygon points="584.9,247.5 593.2,244.5 594.6,250.4 593.4,256.0 586.3,258.7" fill="#dada16" stroke="#dada16" stroke-width="0.6" stroke-linejoin="round"/><line x1="586.3" y1="247.2" x2="587.5" y2="258.3" stroke="#bbbb0c" stroke-width="0.5"/><line x1="587.9" y1="246.7" x2="589.1" y2="257.7" stroke="#bbbb0c" stroke-width="0.5"/><line x1="589.4" y1="246.2" x2="590.6" y2="257.2" stroke="#bbbb0c" stroke-width="0.5"/><line x1="590.9" y1="245.6" x2="592.1" y2="256.6" stroke="#bbbb0c" stroke-width="0.5"/><line x1="592.5" y1="245.1" x2="593.7" y2="256.0" stroke="#bbbb0c" stroke-width="0.5"/><polygon points="550.0,266.6 554.2,260.5 563.6,255.5 575.5,254.6 589.6,259.9 592.0,272.3 585.5,278.4 573.5,280.8 561.3,279.1 551.8,273.7" fill="#eded20" stroke="#eded20" stroke-width="0.6" stroke-linejoin="round"/><polygon points="550.9,265.2 563.6,256.0 573.7,256.0 568.4,264.0 557.7,269.9" fill="#fcfc3e" stroke="#fcfc3e" stroke-width="0.6" stroke-linejoin="round"/><polygon points="575.5,264.0 590.2,260.5 592.0,272.3 585.5,278.4 575.5,280.0" fill="#d8d816" stroke="#d8d816" stroke-width="0.6" stroke-linejoin="round"/><polygon points="555.1,274.6 561.3,279.1 573.5,280.8 585.5,278.4 591.8,272.3 591.8,274.1 585.5,280.1 573.5,282.4 561.3,280.8 555.1,276.5" fill="#c9c90e" stroke="#c9c90e" stroke-width="0.6" stroke-linejoin="round"/><polygon points="542.6,277.6 546.9,270.9 554.4,272.5 556.3,278.4 553.2,282.4 546.9,281.5" fill="#e0e018" stroke="#e0e018" stroke-width="0.6" stroke-linejoin="round"/><polygon points="546.9,270.9 554.4,272.5 551.8,275.6 544.7,274.1" fill="#fcfc3e" stroke="#fcfc3e" stroke-width="0.6" stroke-linejoin="round"/><polygon points="561.9,269.7 567.9,267.1 572.2,272.3 565.5,276.1" fill="#fdfd42" stroke="#fdfd42" stroke-width="0.6" stroke-linejoin="round"/><polygon points="565.5,276.1 572.2,272.3 572.4,274.2 566.2,278.0" fill="#c3c30e" stroke="#c3c30e" stroke-width="0.6" stroke-linejoin="round"/><polygon points="565.4,232.5 564.3,225.9 566.3,209.9 568.3,198.6 572.0,191.9 576.3,190.0 579.6,195.3 578.7,204.6 576.9,213.9 576.3,227.2 577.6,239.2 580.3,249.8 575.0,255.1 567.6,252.5 564.3,244.5" fill="url(#arm)" stroke="#d4d412" stroke-width="0.6" stroke-linejoin="round"/><polygon points="561.9,227.2 565.4,225.2 565.9,244.5 563.0,241.8" fill="#d8d816" stroke="#d8d816" stroke-width="0.6" stroke-linejoin="round"/><ellipse cx="572.3" cy="203.9" rx="5.1" ry="8.2" fill="#f1f128" stroke="#d0d012" stroke-width="0.5" transform="rotate(12 572.3 203.9)"/><ellipse cx="571.0" cy="260.2" rx="7.1" ry="10.4" fill="#eeee22" stroke="#c9c90e" stroke-width="0.6" transform="rotate(-8 571.0 260.2)"/><polygon points="578.7,190.0 582.3,182.6 586.9,179.3 594.9,176.7 598.9,178.2 600.9,182.6 606.2,184.0 606.2,187.3 599.6,191.9 594.9,198.6 586.3,201.9 580.3,204.8 578.3,198.6" fill="#eded20" stroke="#d4d412" stroke-width="0.6" stroke-linejoin="round"/><polygon points="582.7,182.6 594.9,177.3 598.9,178.8 600.2,182.8 594.9,186.0 583.6,188.6" fill="#fcfc3e" stroke="#fcfc3e" stroke-width="0.6" stroke-linejoin="round"/><polygon points="578.9,196.6 583.6,189.3 594.9,186.6 597.3,192.6 594.4,198.2 586.3,201.7 580.5,204.3" fill="#e0e01a" stroke="#e0e01a" stroke-width="0.6" stroke-linejoin="round"/><polygon points="592.9,183.3 600.9,182.6 606.2,184.4 605.9,187.0 598.9,190.0" fill="#e4e41c" stroke="#e4e41c" stroke-width="0.6" stroke-linejoin="round"/><polygon points="597.3,191.9 599.6,188.6 604.5,190.0 624.4,203.0 622.2,211.5 617.5,209.9 599.6,198.6" fill="#eded20" stroke="#d4d412" stroke-width="0.5" stroke-linejoin="round"/><polygon points="600.0,188.9 604.5,190.2 623.9,203.3 623.1,206.2" fill="#fcfc3e" stroke="#fcfc3e" stroke-width="0.6" stroke-linejoin="round"/><polygon points="599.6,198.6 600.2,196.1 621.5,208.8 622.2,211.5 617.5,209.9" fill="#d8d816" stroke="#d8d816" stroke-width="0.6" stroke-linejoin="round"/><polygon points="620.4,204.8 624.2,203.9 632.8,200.3 640.1,205.6 654.1,213.9 659.0,219.5 658.8,224.3 656.1,227.5 656.8,230.5 652.8,233.6 648.1,232.5 640.1,226.5 621.5,213.9" fill="#eded20" stroke="#d4d412" stroke-width="0.5" stroke-linejoin="round"/><polygon points="624.4,204.3 632.8,200.9 640.1,206.2 653.7,214.2 648.1,216.8 636.1,209.9" fill="#fcfc3e" stroke="#fcfc3e" stroke-width="0.6" stroke-linejoin="round"/><polygon points="621.5,213.9 622.2,210.6 637.5,220.5 648.1,228.5 656.1,227.5 656.8,230.5 652.8,233.6 648.1,232.5 640.1,226.5" fill="#d8d816" stroke="#d8d816" stroke-width="0.6" stroke-linejoin="round"/><ellipse cx="642.5" cy="215.9" rx="4.6" ry="1.9" fill="#8f9eb8" stroke="#bfbf0c" stroke-width="0.4" transform="rotate(27 642.5 215.9)"/><polygon points="635.5,230.5 641.2,228.3 643.9,232.5 643.5,238.1 638.1,240.8 635.9,237.2" fill="#a6a6a6" stroke="#a6a6a6" stroke-width="0.6" stroke-linejoin="round"/><polygon points="635.5,230.5 641.2,228.3 643.9,232.5 638.8,234.1" fill="#bdbdbd" stroke="#bdbdbd" stroke-width="0.6" stroke-linejoin="round"/><polygon points="648.1,233.6 652.1,233.6 651.8,239.2 649.7,242.5 648.6,239.2" fill="#b0b0b0" stroke="#b0b0b0" stroke-width="0.6" stroke-linejoin="round"/><path d="M650.0 241.8L650.2 249.8L646.8 256.5" fill="none" stroke="#7e7e7e" stroke-width="1"/><path d="M648.1 253.5L645.7 257.5" fill="none" stroke="#b2b2b2" stroke-width="1.6"/><line x1="630.2" y1="310.4" x2="658.0" y2="326.1" stroke="#f01010" stroke-width="2.1"/><polygon points="665.0,330.0 656.5,328.9 659.6,323.3" fill="#f01010"/><line x1="630.2" y1="310.4" x2="658.0" y2="294.6" stroke="#10dc18" stroke-width="2.1"/><polygon points="665.0,290.6 659.6,297.3 656.5,291.8" fill="#10dc18"/><line x1="630.2" y1="310.4" x2="630.3" y2="278.8" stroke="#0808f0" stroke-width="2.1"/><polygon points="630.3,270.0 633.6,278.8 627.0,278.8" fill="#0808f0"/><polygon points="912.0,496.2 921.0,501.4 921.0,499.9 912.0,494.8" fill="#a8a8a8" stroke="#222222" stroke-width="0.5" stroke-linejoin="round"/><polygon points="921.0,501.4 929.9,496.2 929.9,494.8 921.0,499.9" fill="#bcbcbc" stroke="#222222" stroke-width="0.5" stroke-linejoin="round"/><polygon points="912.0,494.8 921.0,499.9 929.9,494.8 921.0,489.6" fill="#cfcfcf" stroke="#222222" stroke-width="0.5" stroke-linejoin="round"/><polygon points="958.4,523.0 967.3,528.1 967.3,526.6 958.4,521.5" fill="#a8a8a8" stroke="#222222" stroke-width="0.5" stroke-linejoin="round"/><polygon points="967.3,528.1 976.2,523.0 976.2,521.5 967.3,526.6" fill="#bcbcbc" stroke="#222222" stroke-width="0.5" stroke-linejoin="round"/><polygon points="958.4,521.5 967.3,526.6 976.2,521.5 967.3,516.3" fill="#cfcfcf" stroke="#222222" stroke-width="0.5" stroke-linejoin="round"/><polygon points="878.0,514.9 934.1,547.3 934.1,545.8 878.0,513.4" fill="#a8a8a8" stroke="#222222" stroke-width="0.5" stroke-linejoin="round"/><polygon points="934.1,547.3 943.0,542.1 943.0,540.6 934.1,545.8" fill="#bcbcbc" stroke="#222222" stroke-width="0.5" stroke-linejoin="round"/><polygon points="878.0,513.4 934.1,545.8 943.0,540.6 886.9,508.2" fill="#cfcfcf" stroke="#222222" stroke-width="0.5" stroke-linejoin="round"/><polygon points="926.1,542.6 935.0,547.8 935.0,546.3 926.1,541.1" fill="#a8a8a8" stroke="#222222" stroke-width="0.5" stroke-linejoin="round"/><polygon points="935.0,547.8 977.1,523.5 977.1,522.0 935.0,546.3" fill="#bcbcbc" stroke="#222222" stroke-width="0.5" stroke-linejoin="round"/><polygon points="926.1,541.1 935.0,546.3 977.1,522.0 968.2,516.8" fill="#cfcfcf" stroke="#222222" stroke-width="0.5" stroke-linejoin="round"/><polygon points="915.5,494.8 921.0,497.9 921.0,448.5 915.5,445.4" fill="#b6b6b6" stroke="#222222" stroke-width="0.7" stroke-linejoin="round"/><polygon points="921.0,497.9 926.4,494.8 926.4,445.4 921.0,448.5" fill="#c6c6c6" stroke="#222222" stroke-width="0.7" stroke-linejoin="round"/><polygon points="915.5,445.4 921.0,448.5 926.4,445.4 921.0,442.2" fill="#d2d2d2" stroke="#222222" stroke-width="0.7" stroke-linejoin="round"/><line x1="917.3" y1="495.8" x2="917.3" y2="446.4" stroke="#555555" stroke-width="0.45"/><line x1="922.8" y1="496.9" x2="922.8" y2="447.5" stroke="#555555" stroke-width="0.45"/><line x1="919.2" y1="496.9" x2="919.2" y2="447.5" stroke="#555555" stroke-width="0.45"/><line x1="924.6" y1="495.8" x2="924.6" y2="446.4" stroke="#555555" stroke-width="0.45"/><polygon points="961.8,521.5 967.3,524.6 967.3,475.2 961.8,472.1" fill="#b6b6b6" stroke="#222222" stroke-width="0.7" stroke-linejoin="round"/><polygon points="967.3,524.6 972.7,521.5 972.7,472.1 967.3,475.2" fill="#c6c6c6" stroke="#222222" stroke-width="0.7" stroke-linejoin="round"/><polygon points="961.8,472.1 967.3,475.2 972.7,472.1 967.3,468.9" fill="#d2d2d2" stroke="#222222" stroke-width="0.7" stroke-linejoin="round"/><line x1="963.6" y1="522.5" x2="963.6" y2="473.1" stroke="#555555" stroke-width="0.45"/><line x1="969.1" y1="523.6" x2="969.1" y2="474.2" stroke="#555555" stroke-width="0.45"/><line x1="965.5" y1="523.6" x2="965.5" y2="474.2" stroke="#555555" stroke-width="0.45"/><line x1="970.9" y1="522.5" x2="970.9" y2="473.1" stroke="#555555" stroke-width="0.45"/><polygon points="921.0,497.6 961.8,521.2 961.8,513.6 921.0,490.0" fill="#b6b6b6" stroke="#222222" stroke-width="0.7" stroke-linejoin="round"/><polygon points="961.8,521.2 967.3,518.0 967.3,510.4 961.8,513.6" fill="#c6c6c6" stroke="#222222" stroke-width="0.7" stroke-linejoin="round"/><polygon points="921.0,490.0 961.8,513.6 967.3,510.4 926.4,486.9" fill="#d2d2d2" stroke="#222222" stroke-width="0.7" stroke-linejoin="round"/><line x1="922.8" y1="489.0" x2="963.6" y2="512.6" stroke="#555555" stroke-width="0.45"/><line x1="921.0" y1="495.1" x2="961.8" y2="518.7" stroke="#555555" stroke-width="0.45"/><line x1="924.6" y1="487.9" x2="965.5" y2="511.5" stroke="#555555" stroke-width="0.45"/><line x1="921.0" y1="492.5" x2="961.8" y2="516.1" stroke="#555555" stroke-width="0.45"/><polygon points="888.7,509.9 894.1,513.1 894.1,505.5 888.7,502.4" fill="#b6b6b6" stroke="#222222" stroke-width="0.7" stroke-linejoin="round"/><polygon points="894.1,513.1 921.0,497.6 921.0,490.0 894.1,505.5" fill="#c6c6c6" stroke="#222222" stroke-width="0.7" stroke-linejoin="round"/><polygon points="888.7,502.4 894.1,505.5 921.0,490.0 915.5,486.9" fill="#d2d2d2" stroke="#222222" stroke-width="0.7" stroke-linejoin="round"/><line x1="890.5" y1="503.4" x2="917.3" y2="487.9" stroke="#555555" stroke-width="0.45"/><line x1="894.1" y1="510.6" x2="921.0" y2="495.1" stroke="#555555" stroke-width="0.45"/><line x1="892.3" y1="504.5" x2="919.2" y2="489.0" stroke="#555555" stroke-width="0.45"/><line x1="894.1" y1="508.0" x2="921.0" y2="492.5" stroke="#555555" stroke-width="0.45"/><polygon points="935.0,536.7 940.4,539.9 940.4,532.2 935.0,529.1" fill="#b6b6b6" stroke="#222222" stroke-width="0.7" stroke-linejoin="round"/><polygon points="940.4,539.9 967.3,524.4 967.3,516.8 940.4,532.2" fill="#c6c6c6" stroke="#222222" stroke-width="0.7" stroke-linejoin="round"/><polygon points="935.0,529.1 940.4,532.2 967.3,516.8 961.8,513.6" fill="#d2d2d2" stroke="#222222" stroke-width="0.7" stroke-linejoin="round"/><line x1="936.8" y1="530.1" x2="963.6" y2="514.6" stroke="#555555" stroke-width="0.45"/><line x1="940.4" y1="537.3" x2="967.3" y2="521.8" stroke="#555555" stroke-width="0.45"/><line x1="938.6" y1="531.2" x2="965.5" y2="515.7" stroke="#555555" stroke-width="0.45"/><line x1="940.4" y1="534.8" x2="967.3" y2="519.3" stroke="#555555" stroke-width="0.45"/><polygon points="915.5,445.4 967.3,475.2 967.3,467.6 915.5,437.8" fill="#b6b6b6" stroke="#222222" stroke-width="0.7" stroke-linejoin="round"/><polygon points="967.3,475.2 972.7,472.1 972.7,464.5 967.3,467.6" fill="#c6c6c6" stroke="#222222" stroke-width="0.7" stroke-linejoin="round"/><polygon points="915.5,437.8 967.3,467.6 972.7,464.5 921.0,434.6" fill="#d2d2d2" stroke="#222222" stroke-width="0.7" stroke-linejoin="round"/><line x1="917.3" y1="436.7" x2="969.1" y2="466.6" stroke="#555555" stroke-width="0.45"/><line x1="915.5" y1="442.8" x2="967.3" y2="472.7" stroke="#555555" stroke-width="0.45"/><line x1="919.2" y1="435.6" x2="970.9" y2="465.5" stroke="#555555" stroke-width="0.45"/><line x1="915.5" y1="440.3" x2="967.3" y2="470.2" stroke="#555555" stroke-width="0.45"/><polygon points="883.2,464.0 888.7,467.1 888.7,459.5 883.2,456.4" fill="#b6b6b6" stroke="#222222" stroke-width="0.7" stroke-linejoin="round"/><polygon points="888.7,467.1 921.0,448.5 921.0,440.9 888.7,459.5" fill="#c6c6c6" stroke="#222222" stroke-width="0.7" stroke-linejoin="round"/><polygon points="883.2,456.4 888.7,459.5 921.0,440.9 915.5,437.8" fill="#d2d2d2" stroke="#222222" stroke-width="0.7" stroke-linejoin="round"/><line x1="885.0" y1="457.4" x2="917.3" y2="438.8" stroke="#555555" stroke-width="0.45"/><line x1="888.7" y1="464.6" x2="921.0" y2="446.0" stroke="#555555" stroke-width="0.45"/><line x1="886.9" y1="458.5" x2="919.2" y2="439.9" stroke="#555555" stroke-width="0.45"/><line x1="888.7" y1="462.1" x2="921.0" y2="443.4" stroke="#555555" stroke-width="0.45"/><polygon points="883.2,513.4 888.7,516.5 888.7,467.1 883.2,464.0" fill="#b6b6b6" stroke="#222222" stroke-width="0.7" stroke-linejoin="round"/><polygon points="888.7,516.5 894.1,513.4 894.1,464.0 888.7,467.1" fill="#c6c6c6" stroke="#222222" stroke-width="0.7" stroke-linejoin="round"/><polygon points="883.2,464.0 888.7,467.1 894.1,464.0 888.7,460.9" fill="#d2d2d2" stroke="#222222" stroke-width="0.7" stroke-linejoin="round"/><line x1="885.0" y1="514.4" x2="885.0" y2="465.0" stroke="#555555" stroke-width="0.45"/><line x1="890.5" y1="515.5" x2="890.5" y2="466.1" stroke="#555555" stroke-width="0.45"/><line x1="886.9" y1="515.5" x2="886.9" y2="466.1" stroke="#555555" stroke-width="0.45"/><line x1="892.3" y1="514.4" x2="892.3" y2="465.0" stroke="#555555" stroke-width="0.45"/><polygon points="888.7,516.2 929.5,539.9 929.5,532.2 888.7,508.6" fill="#b6b6b6" stroke="#222222" stroke-width="0.7" stroke-linejoin="round"/><polygon points="929.5,539.9 935.0,536.7 935.0,529.1 929.5,532.2" fill="#c6c6c6" stroke="#222222" stroke-width="0.7" stroke-linejoin="round"/><polygon points="888.7,508.6 929.5,532.2 935.0,529.1 894.1,505.5" fill="#d2d2d2" stroke="#222222" stroke-width="0.7" stroke-linejoin="round"/><line x1="890.5" y1="507.6" x2="931.3" y2="531.2" stroke="#555555" stroke-width="0.45"/><line x1="888.7" y1="513.7" x2="929.5" y2="537.3" stroke="#555555" stroke-width="0.45"/><line x1="892.3" y1="506.5" x2="933.2" y2="530.1" stroke="#555555" stroke-width="0.45"/><line x1="888.7" y1="511.2" x2="929.5" y2="534.8" stroke="#555555" stroke-width="0.45"/><polygon points="929.5,540.1 935.0,543.3 935.0,493.9 929.5,490.8" fill="#b6b6b6" stroke="#222222" stroke-width="0.7" stroke-linejoin="round"/><polygon points="935.0,543.3 940.4,540.1 940.4,490.8 935.0,493.9" fill="#c6c6c6" stroke="#222222" stroke-width="0.7" stroke-linejoin="round"/><polygon points="929.5,490.8 935.0,493.9 940.4,490.8 935.0,487.6" fill="#d2d2d2" stroke="#222222" stroke-width="0.7" stroke-linejoin="round"/><line x1="931.3" y1="541.2" x2="931.3" y2="491.8" stroke="#555555" stroke-width="0.45"/><line x1="936.8" y1="542.3" x2="936.8" y2="492.9" stroke="#555555" stroke-width="0.45"/><line x1="933.2" y1="542.3" x2="933.2" y2="492.9" stroke="#555555" stroke-width="0.45"/><line x1="938.6" y1="541.2" x2="938.6" y2="491.8" stroke="#555555" stroke-width="0.45"/><polygon points="929.5,490.8 935.0,493.9 935.0,486.3 929.5,483.1" fill="#b6b6b6" stroke="#222222" stroke-width="0.7" stroke-linejoin="round"/><polygon points="935.0,493.9 967.3,475.2 967.3,467.6 935.0,486.3" fill="#c6c6c6" stroke="#222222" stroke-width="0.7" stroke-linejoin="round"/><polygon points="929.5,483.1 935.0,486.3 967.3,467.6 961.8,464.5" fill="#d2d2d2" stroke="#222222" stroke-width="0.7" stroke-linejoin="round"/><line x1="931.3" y1="484.2" x2="963.6" y2="465.5" stroke="#555555" stroke-width="0.45"/><line x1="935.0" y1="491.4" x2="967.3" y2="472.7" stroke="#555555" stroke-width="0.45"/><line x1="933.2" y1="485.3" x2="965.5" y2="466.6" stroke="#555555" stroke-width="0.45"/><line x1="935.0" y1="488.8" x2="967.3" y2="470.2" stroke="#555555" stroke-width="0.45"/><polygon points="883.2,464.0 929.5,490.8 929.5,483.1 883.2,456.4" fill="#b6b6b6" stroke="#222222" stroke-width="0.7" stroke-linejoin="round"/><polygon points="929.5,490.8 935.0,487.6 935.0,480.0 929.5,483.1" fill="#c6c6c6" stroke="#222222" stroke-width="0.7" stroke-linejoin="round"/><polygon points="883.2,456.4 929.5,483.1 935.0,480.0 888.7,453.2" fill="#d2d2d2" stroke="#222222" stroke-width="0.7" stroke-linejoin="round"/><line x1="885.0" y1="455.4" x2="931.3" y2="482.1" stroke="#555555" stroke-width="0.45"/><line x1="883.2" y1="461.5" x2="929.5" y2="488.2" stroke="#555555" stroke-width="0.45"/><line x1="886.9" y1="454.3" x2="933.2" y2="481.0" stroke="#555555" stroke-width="0.45"/><line x1="883.2" y1="458.9" x2="929.5" y2="485.7" stroke="#555555" stroke-width="0.45"/><line x1="883.2" y1="456.4" x2="883.2" y2="425.2" stroke="#0808f0" stroke-width="2.1"/><polygon points="883.2,416.4 886.5,425.2 879.9,425.2" fill="#0808f0"/><line x1="883.2" y1="456.4" x2="910.6" y2="440.9" stroke="#10dc18" stroke-width="2.1"/><polygon points="917.6,437.0 912.2,443.7 909.1,438.1" fill="#10dc18"/><line x1="883.2" y1="456.4" x2="910.6" y2="471.9" stroke="#f01010" stroke-width="2.1"/><polygon points="917.6,475.8 909.1,474.7 912.2,469.1" fill="#f01010"/><line x1="1216.2" y1="589.6" x2="1235.8" y2="600.5" stroke="#e8181c" stroke-width="2.4"/><polygon points="1241.0,603.4 1234.4,602.9 1237.1,598.0" fill="#e8181c"/><line x1="1216.2" y1="589.6" x2="1235.7" y2="579.4" stroke="#18d828" stroke-width="2.4"/><polygon points="1241.0,576.6 1237.0,581.9 1234.4,576.9" fill="#18d828"/><line x1="1216.2" y1="589.6" x2="1216.4" y2="568.3" stroke="#1414e6" stroke-width="2.4"/><polygon points="1216.4,561.8 1219.4,568.3 1213.4,568.3" fill="#1414e6"/><text x="1217.6" y="560.2" text-anchor="middle" font-family="Liberation Mono, monospace" font-weight="bold" font-size="10.5" fill="#3c3ce0">Z</text><text x="1246.8" y="576.6" text-anchor="middle" font-family="Liberation Mono, monospace" font-weight="bold" font-size="10.5" fill="#46e050">Y</text><text x="1246.8" y="610.6" text-anchor="middle" font-family="Liberation Mono, monospace" font-weight="bold" font-size="10.5" fill="#ee4a4e">X</text><polygon points="1188.5,159.2 1217.0,174.2 1217.0,206.8 1188.5,190.5" fill="#a6a6a6" stroke="#2c2c2c" stroke-width="0.75" stroke-linejoin="round"/><polygon points="1245.3,159.2 1217.0,174.2 1217.0,206.8 1245.3,191.0" fill="#9b9b9b" stroke="#2c2c2c" stroke-width="0.75" stroke-linejoin="round"/><polygon points="1217.0,143.0 1245.3,159.2 1217.0,174.2 1188.5,159.2" fill="#b2b2b2" stroke="#2c2c2c" stroke-width="0.75" stroke-linejoin="round"/><polygon points="1217.0,146.6 1237.9,159.0 1217.0,171.0 1195.9,159.0" fill="#680202" stroke="#e61a1a" stroke-width="0.9" stroke-linejoin="round"/><polygon points="1210.9,169.6 1217.0,171.1 1222.8,169.6 1221.3,172.8 1217.0,174.9 1212.6,172.8" fill="#707070" stroke="#707070" stroke-width="0.6" stroke-linejoin="round"/><polyline points="1210.9,169.3 1209.2,171.9 1209.5,174.7 1213.7,176.6 1213.7,181.1 1217.0,183.2 1220.6,181.1 1220.6,176.8 1224.6,174.7 1225.0,171.6 1222.8,169.3" fill="none" stroke="#e6e01c" stroke-width="0.9" stroke-linejoin="round"/><text transform="translate(1202.9,185.3) skewY(29.7)" text-anchor="middle" font-family="Liberation Mono, monospace" font-size="6.9" fill="#2a2a2a">Left</text><text transform="translate(1230.9,185.6) skewY(-29.7)" text-anchor="middle" font-family="Liberation Mono, monospace" font-size="6.9" fill="#2a2a2a">Front</text><text transform="translate(1217.4,160.6) rotate(-30) skewX(30) scale(1,0.86)" text-anchor="middle" font-family="Liberation Mono, monospace" font-size="6.6" fill="#160000">Up</text></g></svg>
<div class="abs" style="left:1118.6px;top:119px;width:140.4px;height:130px;border:3.3px solid #ff2a05"></div>
<div class="abs" style="left:710px;top:132px;width:116.8px;height:30px;border-radius:5px;background:rgba(92,108,136,0.86)"></div>
<div class="abs" style="left:770.5px;top:134.3px;width:24.5px;height:25px;background:rgba(86,100,130,0.7)"></div>
<svg class="abs" style="left:717px;top:136.6px;overflow:visible" width="15" height="16"><path d="M7.4 0.4L14.2 4.2V11.6L7.4 15.4L0.6 11.6V4.2Z" fill="#b6e7c2"/><path d="M7.4 7.8V15M7.4 7.8L1 4.4M7.4 7.8L13.8 4.4" stroke="#93cfa2" stroke-width="0.7" stroke-dasharray="1.2 1" fill="none"/></svg>
<svg class="abs" style="left:721.8px;top:155.3px;overflow:visible" width="6" height="3"><path d="M0 0H6L3 2.6Z" fill="#4a5468"/></svg>
<svg class="abs" style="left:745.6px;top:136.6px;overflow:visible" width="15" height="15"><path d="M0.6 0.8H10.6L13.6 3.6V13H3.4L0.6 10.2Z" fill="#d4d4d4"/><path d="M0.6 0.8H10.6L13.6 3.6H3.4Z" fill="#f4f4f4"/><rect x="3.4" y="3.6" width="10.2" height="9.6" fill="#ffffff"/></svg>
<div class="t" style="left:750.2px;top:147.3px;font-size:6px;color:#f4f6fa;letter-spacing:-0.15px;text-shadow:0 0 1px #5a6884">Solid</div>
<svg class="abs" style="left:750.6px;top:155.3px;overflow:visible" width="6" height="3"><path d="M0 0H6L3 2.6Z" fill="#4a5468"/></svg>
<svg class="abs" style="left:775px;top:138px;overflow:visible" width="16" height="16"><path d="M0.6 0.6H12.6L15.6 3.4V15.2H3.6L0.6 12.4Z" fill="#a4dab2"/><path d="M0.6 0.6H12.6L15.6 3.4H3.6Z" fill="#c4edcf"/><path d="M0.6 0.6L3.6 3.4V15.2L0.6 12.4Z" fill="#dff5e5"/><rect x="3.6" y="3.4" width="12" height="11.8" fill="#b2e4bf"/></svg>
<svg class="abs" style="left:780px;top:155.3px;overflow:visible" width="6" height="3"><path d="M0 0H6L3 2.6Z" fill="#4a5468"/></svg>
<svg class="abs" style="left:802.6px;top:135.6px;overflow:visible" width="18.4" height="18.4"><path d="M0.6 4.2V0.6H4.4 M14 0.6H17.8V4.2 M17.8 14V17.6H14 M4.4 17.6H0.6V14" fill="none" stroke="#b6e7c2" stroke-width="1.3"/><path d="M3.6 3.6H12L14.8 6V15H6.2L3.6 12.6Z" fill="#d8d8d8"/><path d="M3.6 3.6H12L14.8 6H6.2Z" fill="#f2f2f2"/><rect x="6.2" y="6" width="8.6" height="9" fill="#ffffff"/></svg>
<div class="abs" style="left:1px;top:640px;width:1265px;height:19px;background:#fff;border-top:1px solid #ececec"></div>
<div class="abs" style="left:1px;top:659px;width:1264px;height:16px;background:#ebebeb"></div>
<div class="abs" style="left:2.5px;top:642px;width:45px;height:16px;border:1px solid #e2e2e2;border-radius:2px;background:#fff"></div>
<div class="abs" style="left:49px;top:642px;width:30px;height:16px;border:1px solid #e2e2e2;border-radius:2px;background:#fff"></div>
<div class="t c" style="left:25px;top:650px;font-size:9.6px;color:#222">输出日志</div>
<div class="t c" style="left:64px;top:650px;font-size:10.2px;color:#222">Shell</div>
<div class="abs" style="left:0;top:0;width:1267px;height:677px;border:1px solid #6c6c6c;border-top-color:#727272;pointer-events:none"></div>
</div></body></html>
